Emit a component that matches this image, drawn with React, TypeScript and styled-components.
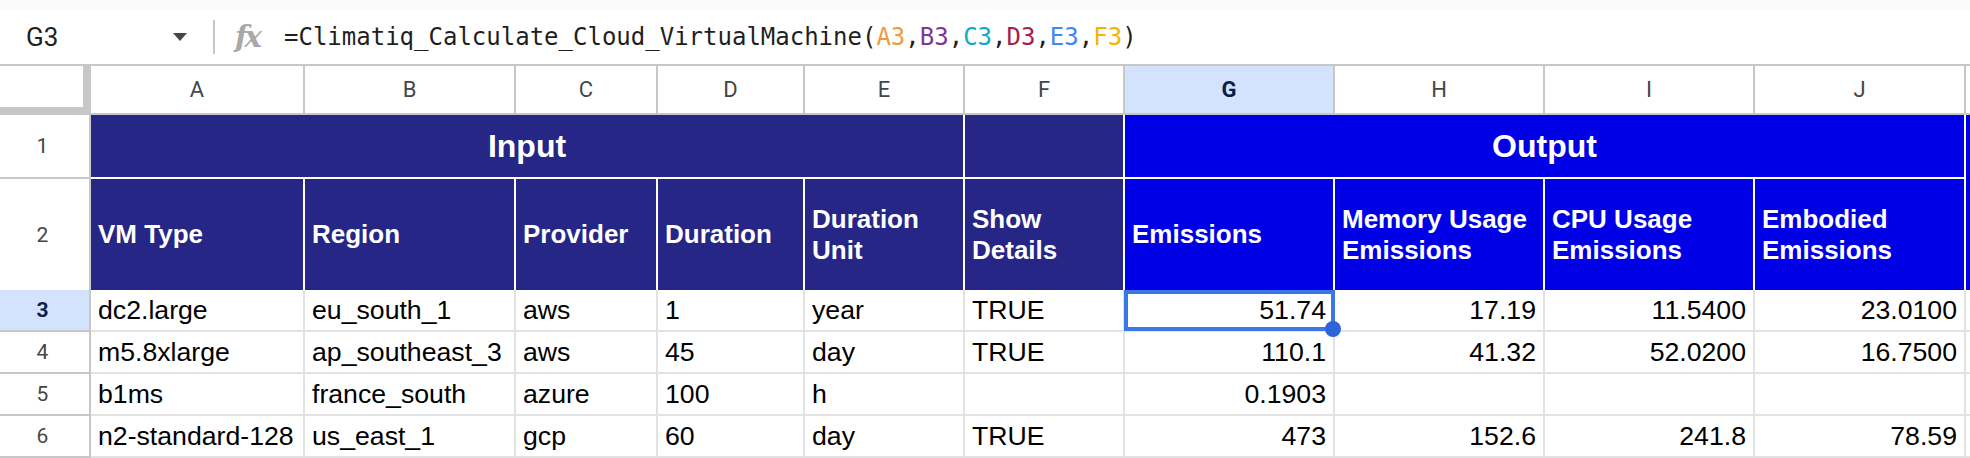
import React from 'react';
import styled, { createGlobalStyle } from 'styled-components';

const GlobalStyle = createGlobalStyle`
  html, body {
    margin: 0;
    padding: 0;
    background: #fff;
    overflow: hidden;
  }
  body {
    font-family: 'Liberation Sans', Arial, sans-serif;
  }
`;

const NAVY = '#262687';
const BLUE = '#0000e6';

// K is only a sliver at the right edge, so it gets no label
const columns = ['A', 'B', 'C', 'D', 'E', 'F', 'G', 'H', 'I', 'J', ''];

const fields: { label: string; tone: 'navy' | 'blue' }[] = [
  { label: 'VM Type', tone: 'navy' },
  { label: 'Region', tone: 'navy' },
  { label: 'Provider', tone: 'navy' },
  { label: 'Duration', tone: 'navy' },
  { label: 'Duration\nUnit', tone: 'navy' },
  { label: 'Show\nDetails', tone: 'navy' },
  { label: 'Emissions', tone: 'blue' },
  { label: 'Memory Usage\nEmissions', tone: 'blue' },
  { label: 'CPU Usage\nEmissions', tone: 'blue' },
  { label: 'Embodied\nEmissions', tone: 'blue' },
];

const rows = [
  ['dc2.large', 'eu_south_1', 'aws', '1', 'year', 'TRUE', '51.74', '17.19', '11.5400', '23.0100'],
  ['m5.8xlarge', 'ap_southeast_3', 'aws', '45', 'day', 'TRUE', '110.1', '41.32', '52.0200', '16.7500'],
  ['b1ms', 'france_south', 'azure', '100', 'h', '', '0.1903', '', '', ''],
  ['n2-standard-128', 'us_east_1', 'gcp', '60', 'day', 'TRUE', '473', '152.6', '241.8', '78.59'],
];

const refs = [
  { name: 'A3', color: '#f09a3e' },
  { name: 'B3', color: '#7e3794' },
  { name: 'C3', color: '#11a9cc' },
  { name: 'D3', color: '#a61d4c' },
  { name: 'E3', color: '#4285f4' },
  { name: 'F3', color: '#f4b400' },
];

export default function App(): React.ReactElement {
  return (
    <>
      <GlobalStyle />
      <Page>
        <TopStrip />
        <FormulaBar>
          <NameBox>
            <NameLabel>G3</NameLabel>
            <svg width="14" height="8" viewBox="0 0 14 8">
              <path d="M0 0 L14 0 L7 8 Z" fill="#444746" />
            </svg>
          </NameBox>
          <Divider />
          <FxIcon>fx</FxIcon>
          <Formula>
            =Climatiq_Calculate_Cloud_VirtualMachine(
            {refs.map((r, i) => (
              <React.Fragment key={r.name}>
                {i > 0 && ','}
                <Ref $color={r.color}>{r.name}</Ref>
              </React.Fragment>
            ))}
            )
          </Formula>
        </FormulaBar>
        <Sheet>
          <Corner />
          {columns.map((c, i) => (
            <ColHead key={i} $selected={c === 'G'}>
              {c}
            </ColHead>
          ))}

          <RowHead $selected={false}>1</RowHead>
          <Banner $tone="navy" $span={5}>
            Input
          </Banner>
          <Banner $tone="navy" $span={1} />
          <Banner $tone="blue" $span={4}>
            Output
          </Banner>
          <Overflow />

          <RowHead $selected={false} $tall>
            2
          </RowHead>
          {fields.map((f) => (
            <FieldHead key={f.label} $tone={f.tone}>
              {f.label}
            </FieldHead>
          ))}

          {rows.map((row, r) => (
            <React.Fragment key={r}>
              <RowHead $selected={r === 0}>{r + 3}</RowHead>
              {row.map((value, c) => (
                <Cell key={c} $right={c >= 6}>
                  {value}
                  {r === 0 && c === 6 && (
                    <Selection>
                      <FillHandle />
                    </Selection>
                  )}
                </Cell>
              ))}
              <Cell $right={false} />
            </React.Fragment>
          ))}
        </Sheet>
      </Page>
    </>
  );
}

const Page = styled.div`
  width: 1970px;
  height: 458px;
  overflow: hidden;
  background: #fff;
`;

const TopStrip = styled.div`
  height: 10px;
  background: #f9fbfd;
`;

const FormulaBar = styled.div`
  display: flex;
  align-items: center;
  height: 54px;
  border-bottom: 2px solid #c7c7c7;
  background: #fff;
`;

const NameBox = styled.div`
  display: flex;
  align-items: center;
  justify-content: space-between;
  box-sizing: border-box;
  width: 200px;
  padding: 0 13px 0 26px;
  margin-right: 13px;
`;

const NameLabel = styled.span`
  font-family: Roboto, 'Noto Sans', sans-serif;
  font-size: 26px;
  color: #1f1f1f;
`;

const Divider = styled.div`
  width: 2px;
  height: 34px;
  background: #c7c7c7;
  margin-right: 20px;
`;

const FxIcon = styled.span`
  font-family: 'DejaVu Serif', serif;
  font-style: italic;
  font-weight: 700;
  font-size: 29px;
  color: #a8a8a8;
  letter-spacing: -3px;
  width: 49px;
`;

const Formula = styled.div`
  font-family: 'DejaVu Sans Mono', monospace;
  font-size: 24px;
  color: #1f1f1f;
  white-space: pre;
`;

const Ref = styled.span<{ $color: string }>`
  color: ${(p) => p.$color};
`;

const Sheet = styled.div`
  display: grid;
  grid-template-columns: 91px 214px 211px 142px 147px 160px 160px 210px 210px 210px 211px 120px;
  grid-template-rows: 49px 64px 111px 42px 42px 42px 42px;
  width: 2100px;
`;

const Corner = styled.div`
  box-sizing: border-box;
  background: #fff;
  border-right: 8px solid #c7c7c7;
  border-bottom: 8px solid #c7c7c7;
`;

const ColHead = styled.div<{ $selected: boolean }>`
  box-sizing: border-box;
  display: flex;
  align-items: center;
  justify-content: center;
  border-right: 2px solid #c7c7c7;
  border-bottom: 2px solid #c7c7c7;
  background: ${(p) => (p.$selected ? '#d3e3fd' : '#fff')};
  color: ${(p) => (p.$selected ? '#0b1f4a' : '#444746')};
  font-family: Roboto, 'Noto Sans', sans-serif;
  font-size: 22px;
  font-weight: ${(p) => (p.$selected ? 700 : 400)};
`;

const RowHead = styled.div<{ $selected: boolean; $tall?: boolean }>`
  box-sizing: border-box;
  display: flex;
  align-items: center;
  justify-content: center;
  padding-right: 4px;
  border-right: 2px solid #c7c7c7;
  border-bottom: ${(p) => (p.$tall ? 'none' : '2px solid #c7c7c7')};
  background: ${(p) => (p.$selected ? '#d3e3fd' : '#fff')};
  color: ${(p) => (p.$selected ? '#0b1f4a' : '#444746')};
  font-family: Roboto, 'Noto Sans', sans-serif;
  font-size: 21px;
  font-weight: ${(p) => (p.$selected ? 700 : 400)};
`;

const Banner = styled.div<{ $tone: 'navy' | 'blue'; $span: number }>`
  grid-column: span ${(p) => p.$span};
  box-sizing: border-box;
  display: flex;
  align-items: center;
  justify-content: center;
  background: ${(p) => (p.$tone === 'navy' ? NAVY : BLUE)};
  border-right: 2px solid #fff;
  border-bottom: 2px solid #fff;
  color: #fff;
  font-size: 32px;
  font-weight: 700;
`;

const Overflow = styled.div`
  grid-row: span 2;
  background: ${BLUE};
`;

const FieldHead = styled.div<{ $tone: 'navy' | 'blue' }>`
  box-sizing: border-box;
  display: flex;
  align-items: center;
  padding-left: 7px;
  background: ${(p) => (p.$tone === 'navy' ? NAVY : BLUE)};
  border-right: 2px solid #fff;
  color: #fff;
  font-size: 26px;
  font-weight: 700;
  line-height: 31px;
  white-space: pre-line;
`;

const Cell = styled.div<{ $right: boolean }>`
  position: relative;
  box-sizing: border-box;
  display: flex;
  align-items: center;
  justify-content: ${(p) => (p.$right ? 'flex-end' : 'flex-start')};
  padding: 0 7px;
  border-right: 2px solid #e2e2e2;
  border-bottom: 2px solid #e2e2e2;
  color: #000;
  font-size: 26.67px;
  line-height: 30px;
  white-space: nowrap;
`;

const Selection = styled.div`
  position: absolute;
  top: 0;
  left: -1px;
  right: -2px;
  bottom: -1px;
  border: 4px solid #3b78e7;
  z-index: 2;
`;

const FillHandle = styled.div`
  position: absolute;
  right: -10px;
  bottom: -10px;
  width: 16px;
  height: 16px;
  border-radius: 50%;
  background: #2f64d8;
`;
